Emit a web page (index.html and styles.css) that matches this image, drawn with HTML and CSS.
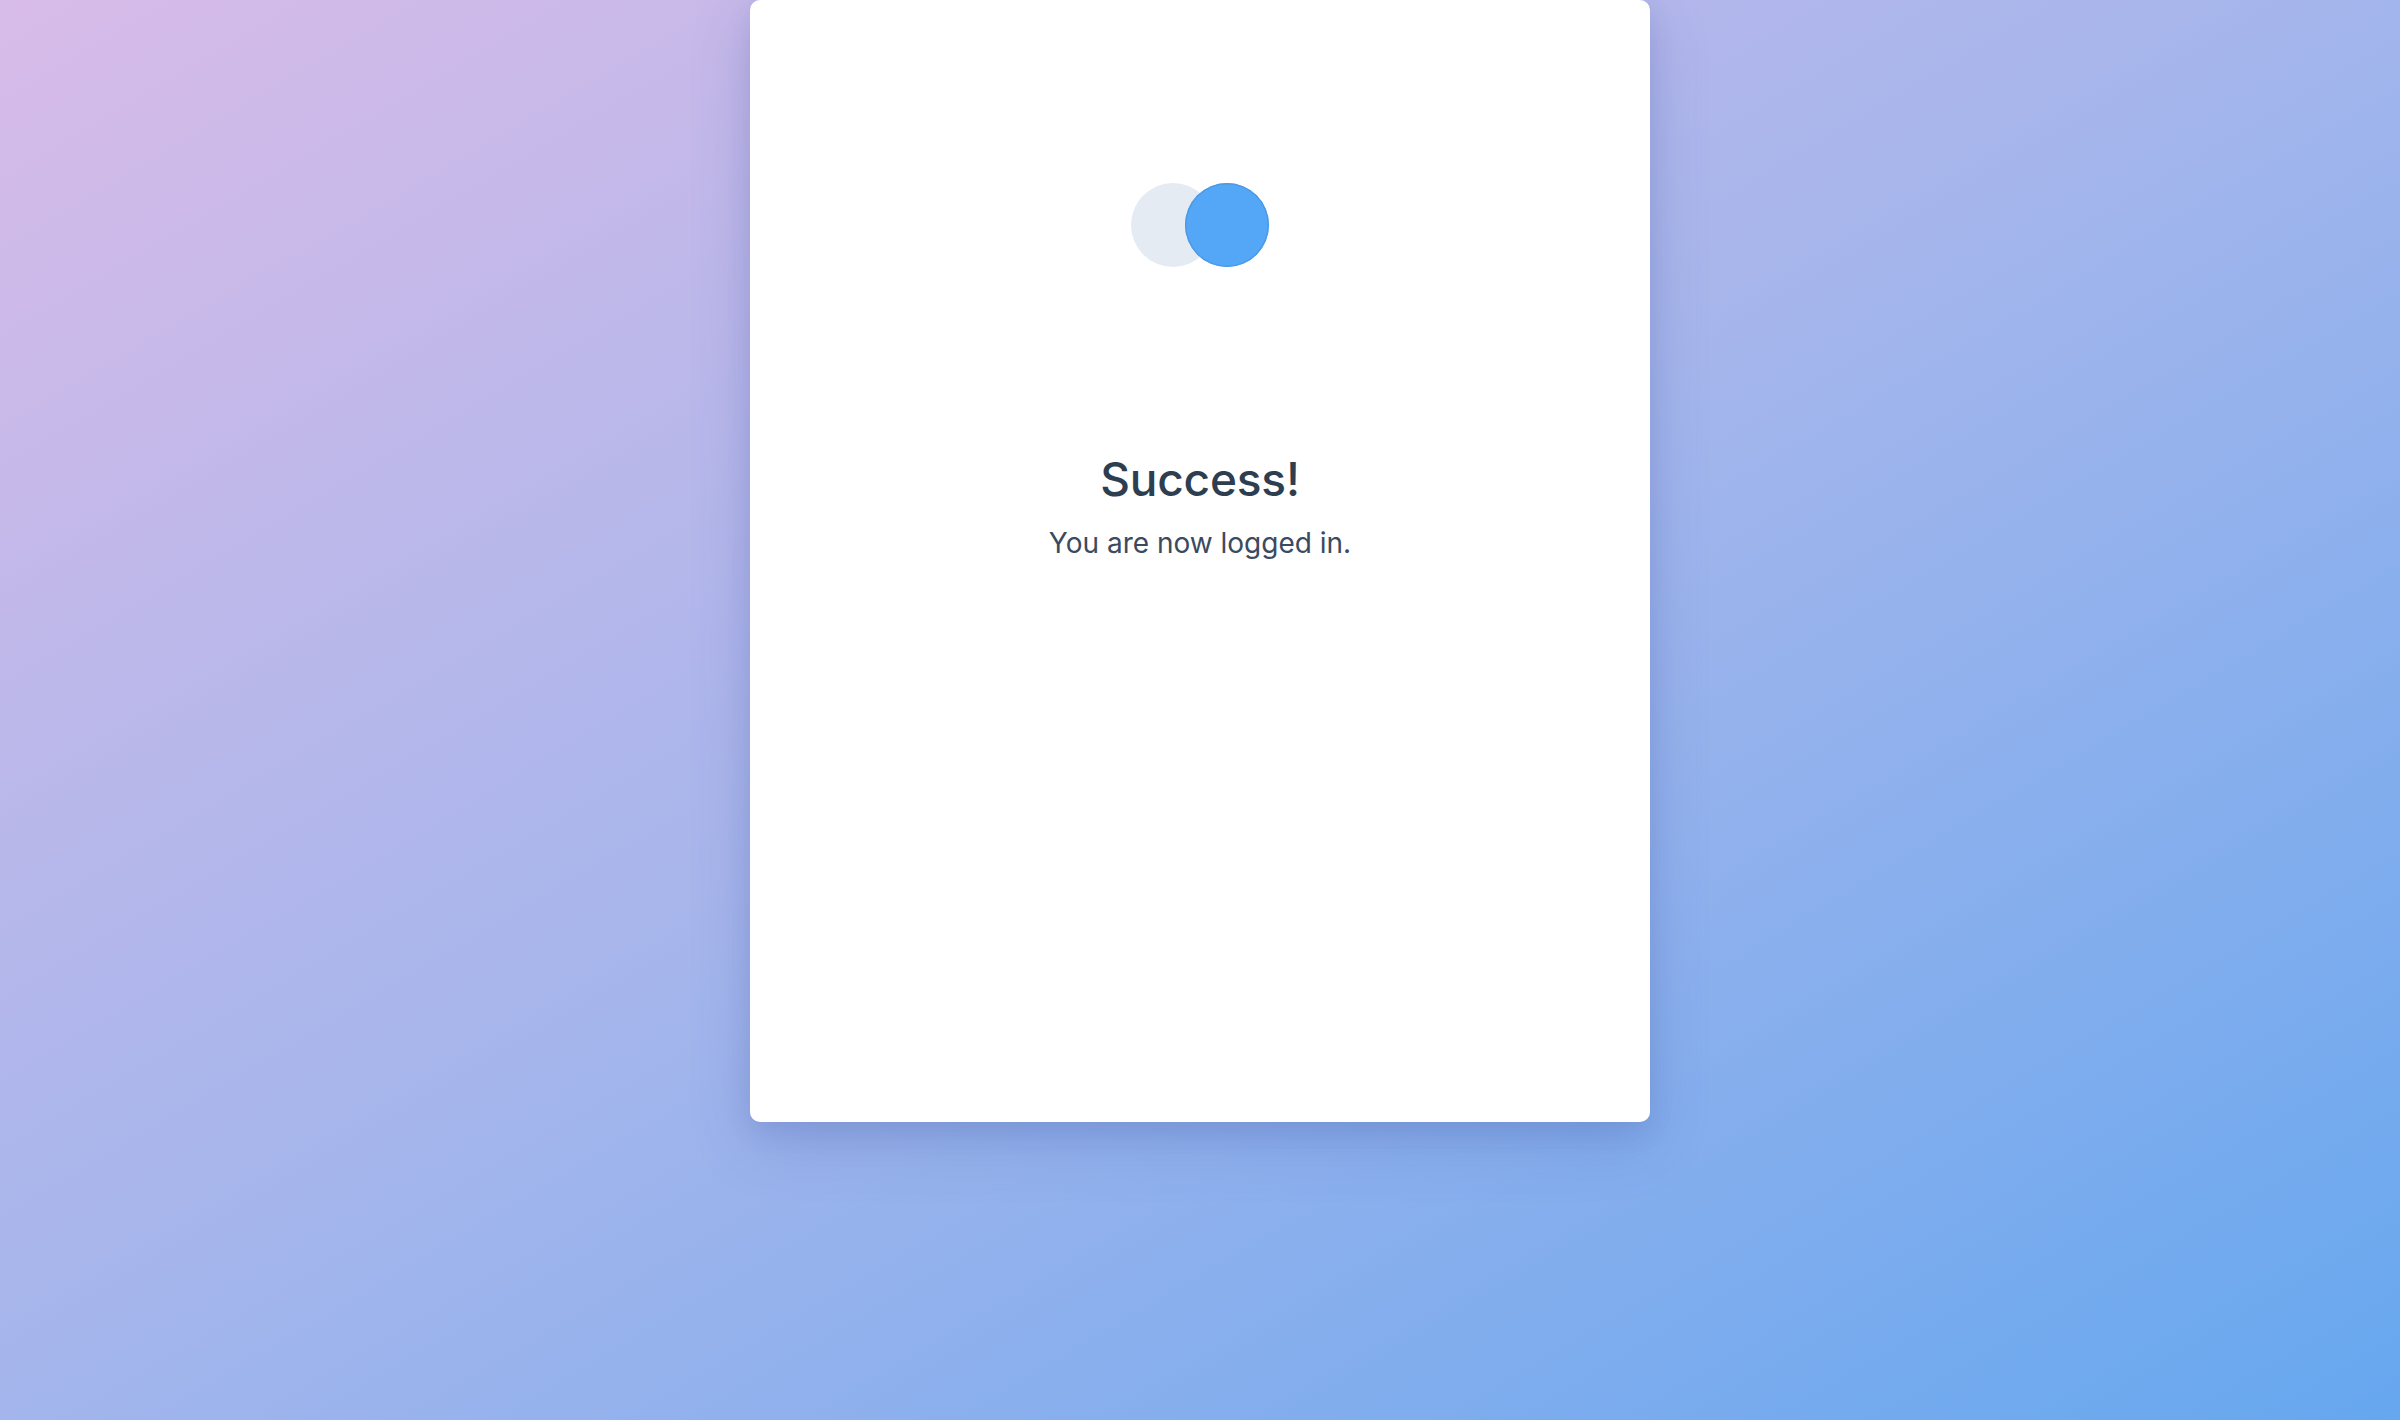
FILE: index.html
```html
<!DOCTYPE html>
<html lang="en">
<head>
<meta charset="utf-8">
<title>Success</title>
<link rel="stylesheet" href="styles.css">
</head>
<body>
<main class="page">
  <section class="card">
    <div class="loader">
      <span class="dot dot-light"></span>
      <span class="dot dot-blue"></span>
    </div>
    <h1 class="title">Success!</h1>
    <p class="subtitle">You are now logged in.</p>
  </section>
</main>
</body>
</html>
```
FILE: styles.css
```css
html, body {
  margin: 0;
  padding: 0;
  height: 100%;
}
body {
  font-family: Inter, "Noto Sans", "Liberation Sans", sans-serif;
  background: linear-gradient(to bottom right, #d8bbe8 0%, #a3b5ec 50%, #66a7ef 100%);
  overflow: hidden;
}
.page {
  display: flex;
  justify-content: center;
  height: 1420px;
}
.card {
  width: 900px;
  height: 1122px;
  background: #ffffff;
  border-radius: 10px;
  box-shadow: 0 20px 60px rgba(60, 80, 160, 0.22), 0 10px 25px rgba(60, 80, 160, 0.12);
  display: flex;
  flex-direction: column;
  align-items: center;
  padding-top: 183px;
  box-sizing: border-box;
}
.loader {
  display: flex;
  height: 84px;
}
.dot {
  width: 84px;
  height: 84px;
  border-radius: 50%;
  filter: blur(0.7px);
}
.dot-light {
  background: #e5ebf3;
}
.dot-blue {
  background: #54a6f7;
  margin-left: -30px;
  box-shadow: inset 0 0 0 1.5px #4e9ae6;
}
.title {
  margin: 184px 0 0;
  font-size: 46px;
  line-height: 56px;
  font-weight: 500;
  color: #2e3e51;
  letter-spacing: -0.2px;
}
.subtitle {
  margin: 18px 0 0;
  font-size: 28px;
  line-height: 36px;
  font-weight: 400;
  color: #3b4a5e;
}
```
